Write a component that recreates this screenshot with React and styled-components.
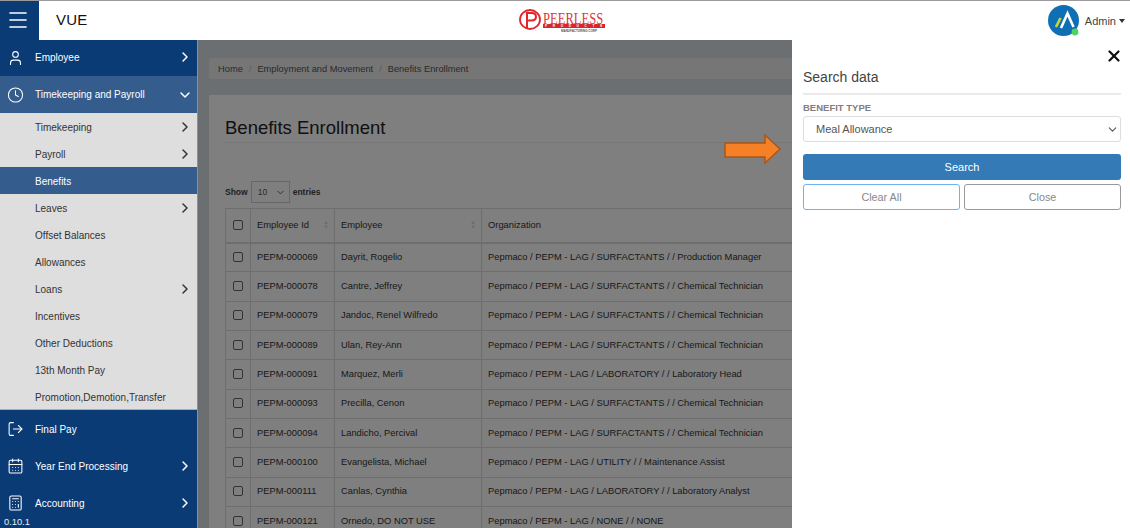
import styled, { createGlobalStyle } from "styled-components";
import { User, Clock, LogOut, CalendarDays, Calculator, ChevronRight, ChevronDown, X, Menu } from "lucide-react";

const GlobalStyle = createGlobalStyle`
  html, body { margin: 0; padding: 0; height: 100%; overflow: hidden; }
  body { font-family: "Liberation Sans", Arial, sans-serif; background: #fff; }
  * { box-sizing: border-box; }
`;

const Page = styled.div`
  width: 1130px;
  height: 528px;
  position: relative;
  overflow: hidden;
  display: flex;
  flex-direction: column;
`;
const Header = styled.header`
  height: 40px;
  flex: none;
  display: flex;
  align-items: center;
  background: #fff;
  border-top: 1px solid #9a9a9a;
`;
const HeaderLeft = styled.div`
  flex: 1;
  display: flex;
  align-items: center;
`;
const MenuButton = styled.div`
  width: 39px;
  height: 39px;
  background: #0b3b75;
  color: #fff;
  display: flex;
  align-items: center;
  justify-content: center;
  padding: 0 3px 1px 0;
`;
const Brand = styled.div`
  margin-left: 17px;
  padding-bottom: 3px;
  font-size: 15px;
  letter-spacing: 0.2px;
  color: #111;
  white-space: nowrap;
`;
const LogoArea = styled.div`
  flex: none;
  display: flex;
`;
const UserArea = styled.div`
  flex: 1;
  display: flex;
  align-items: center;
  justify-content: flex-end;
  gap: 5px;
  padding-right: 5px;
  font-size: 11px;
  color: #444;
`;
const Caret = styled.span`
  width: 0;
  height: 0;
  margin-left: -2px;
  border-left: 3.5px solid transparent;
  border-right: 3.5px solid transparent;
  border-top: 4px solid #333;
`;
const Body = styled.div`
  flex: 1;
  display: flex;
  min-height: 0;
  position: relative;
`;
const Sidebar = styled.nav`
  width: 198px;
  flex: none;
  background: #0b3b75;
  overflow: hidden;
  border-right: 1px solid #8d9094;
`;
const MainRow = styled.div`
  height: ${({ $tall }) => ($tall ? "37px" : "36px")};
  display: flex;
  align-items: center;
  padding: ${({ $nudge }) => ($nudge === "up" ? "0 4px 2px 35px" : $nudge === "down" ? "1px 4px 0 35px" : "0 4px 0 35px")};
  position: relative;
  color: #fff;
  font-size: 10px;
  background: ${({ $open }) => ($open ? "#345d8d" : "transparent")};
  & > span { flex: 1; }
`;
const RowIcon = styled.span`
  position: absolute;
  left: 7px;
  top: 50%;
  transform: translateY(-50%);
  display: flex;
`;
const SubMenu = styled.div`
  background: #dedede;
  box-shadow: inset 0 -1px 0 #a9adb2;
`;
const SubRow = styled.div`
  height: 27px;
  display: flex;
  align-items: center;
  padding: 1px 4px 0 35px;
  font-size: 10px;
  color: ${({ $active }) => ($active ? "#fff" : "#333")};
  background: ${({ $active }) => ($active ? "#345d8d" : "transparent")};
  & > span { flex: 1; }
`;
const Version = styled.div`
  position: absolute;
  left: 4px;
  bottom: 1px;
  font-size: 9.3px;
  color: #e8edf3;
`;
const Main = styled.main`
  flex: 1;
  min-width: 0;
  background: #d6dee4;
  padding: 18px 0 0 11px;
  overflow: hidden;
`;
const Breadcrumb = styled.div`
  height: 21px;
  width: 900px;
  background: #ececec;
  border-radius: 3px;
  display: flex;
  align-items: center;
  gap: 6px;
  padding-left: 9px;
  font-size: 9.3px;
  color: #555;
  & i { font-style: normal; color: #bbb; }
`;
const Card = styled.section`
  margin-top: 16px;
  background: #fff;
  width: 900px;
  height: 600px;
  padding: 20px 16px;
`;
const Title = styled.h1`
  margin: 0;
  font-size: 18.5px;
  line-height: 26px;
  font-weight: 400;
  color: #222;
`;
const Rule = styled.div`
  height: 1px;
  background: #eee;
  margin-top: 1px;
`;
const Entries = styled.div`
  margin-top: 38px;
  display: flex;
  align-items: center;
  gap: 3px;
  font-size: 8.5px;
  font-weight: 700;
  color: #444;
  height: 22px;
`;
const EntriesSelect = styled.div`
  width: 39px;
  height: 22px;
  border: 1px solid #ccc;
  display: flex;
  align-items: center;
  justify-content: space-between;
  padding: 0 3px 0 6px;
  font-weight: 400;
  color: #555;
`;
const Table = styled.table`
  margin-top: 5px;
  border-collapse: collapse;
  table-layout: fixed;
  width: 720px;
  font-size: 9.35px;
  color: #333;
  & th, & td {
    border: 1px solid #ddd;
    padding: 0 6px 1px;
    font-weight: 400;
    text-align: left;
    white-space: nowrap;
    overflow: hidden;
  }
  & th { height: 34px; border-bottom-width: 2px; position: relative; }
  & td { height: 29.35px; }
`;
const Check = styled.span`
  display: block;
  width: 10px;
  height: 10px;
  margin-left: 1px;
  border: 1px solid #666;
  border-radius: 2px;
  background: #fff;
`;
const SortMark = styled.span`
  position: absolute;
  right: 5px;
  top: 11px;
  font-size: 6px;
  line-height: 5px;
  color: #ddd;
`;
const Overlay = styled.div`
  position: absolute;
  inset: 0 0 0 198px;
  background: rgba(0, 0, 0, 0.5);
`;
const ArrowMark = styled.svg`
  position: absolute;
  left: 723px;
  top: 92px;
`;
const Panel = styled.aside`
  position: absolute;
  top: 0;
  right: 0;
  bottom: 0;
  width: 338px;
  background: #fff;
  padding: 0 9px 0 11px;
`;
const CloseButton = styled.div`
  height: 29px;
  display: flex;
  justify-content: flex-end;
  align-items: flex-start;
  color: #111;
  padding-top: 7px;
  margin-right: -2px;
`;
const PanelTitle = styled.h2`
  margin: 0;
  font-size: 14px;
  line-height: 17px;
  height: 26px;
  font-weight: 400;
  color: #444;
  border-bottom: 2px solid #eaeaea;
`;
const Label = styled.div`
  margin-top: 7px;
  font-size: 9.5px;
  line-height: 12px;
  font-weight: 700;
  color: #808080;
`;
const SelectBox = styled.div`
  margin-top: 2px;
  height: 26px;
  border: 1px solid #ddd;
  border-radius: 3px;
  display: flex;
  align-items: center;
  justify-content: space-between;
  padding: 0 1px 0 12px;
  font-size: 11px;
  color: #555;
`;
const PrimaryButton = styled.div`
  margin-top: 12px;
  height: 26px;
  background: #337ab7;
  border-radius: 3px;
  display: flex;
  align-items: center;
  justify-content: center;
  color: #fff;
  font-size: 11px;
`;
const ButtonRow = styled.div`
  margin-top: 4px;
  display: grid;
  grid-template-columns: 1fr 1fr;
  gap: 4px;
`;
const OutlineButton = styled.div`
  height: 26px;
  border: 1px solid ${({ $accent }) => ($accent ? "#6db3f2" : "#999")};
  border-radius: 3px;
  display: flex;
  align-items: center;
  justify-content: center;
  color: #888;
  font-size: 10.8px;
`;

const subItems = [
  ["Timekeeping", true],
  ["Payroll", true],
  ["Benefits", false, true],
  ["Leaves", true],
  ["Offset Balances"],
  ["Allowances"],
  ["Loans", true],
  ["Incentives"],
  ["Other Deductions"],
  ["13th Month Pay"],
  ["Promotion,Demotion,Transfer"],
];

const rows = [
  ["PEPM-000069", "Dayrit, Rogelio", "Pepmaco / PEPM - LAG / SURFACTANTS / / Production Manager"],
  ["PEPM-000078", "Cantre, Jeffrey", "Pepmaco / PEPM - LAG / SURFACTANTS / / Chemical Technician"],
  ["PEPM-000079", "Jandoc, Renel Wilfredo", "Pepmaco / PEPM - LAG / SURFACTANTS / / Chemical Technician"],
  ["PEPM-000089", "Ulan, Rey-Ann", "Pepmaco / PEPM - LAG / SURFACTANTS / / Chemical Technician"],
  ["PEPM-000091", "Marquez, Merli", "Pepmaco / PEPM - LAG / LABORATORY / / Laboratory Head"],
  ["PEPM-000093", "Precilla, Cenon", "Pepmaco / PEPM - LAG / SURFACTANTS / / Chemical Technician"],
  ["PEPM-000094", "Landicho, Percival", "Pepmaco / PEPM - LAG / SURFACTANTS / / Chemical Technician"],
  ["PEPM-000100", "Evangelista, Michael", "Pepmaco / PEPM - LAG / UTILITY / / Maintenance Assist"],
  ["PEPM-000111", "Canlas, Cynthia", "Pepmaco / PEPM - LAG / LABORATORY / / Laboratory Analyst"],
  ["PEPM-000121", "Ornedo, DO NOT USE", "Pepmaco / PEPM - LAG / NONE / / NONE"],
];

function PeerlessLogo() {
  return (
    <svg width="90" height="26" viewBox="0 0 90 26">
      <ellipse cx="12" cy="11.5" rx="10" ry="9.5" fill="none" stroke="#e0262b" strokeWidth="1.8" />
      <path d="M9 21 L9 5 L13.5 5 Q18 5 18 8.5 Q18 12.5 13.5 12.5 L9 12.5" fill="none" stroke="#e0262b" strokeWidth="2" />
      <text transform="translate(25 15.5) scale(0.72 1)" x="0" y="0" fontFamily="Liberation Serif, serif" fontSize="17.5" fill="#d8393d">PEERLESS</text>
      <rect x="25" y="16" width="62" height="4" fill="#d8262b" />
      <text x="27" y="19.3" fontFamily="Liberation Sans, sans-serif" fontSize="3.2" fontWeight="700" fill="#fff" letterSpacing="5.6">PRODUCTS</text>
      <text x="43" y="24" fontFamily="Liberation Sans, sans-serif" fontSize="3" fontWeight="700" fill="#555">MANUFACTURING CORP</text>
    </svg>
  );
}

function Avatar() {
  return (
    <svg width="32" height="32" viewBox="0 0 32 32">
      <circle cx="15.5" cy="15.5" r="15.5" fill="#0f6fb5" />
      <path d="M8 22 L12.5 13" stroke="#c6d63a" strokeWidth="2.6" fill="none" />
      <path d="M13 23 L19.5 8.5 L25.5 22" stroke="#fff" strokeWidth="2.6" fill="none" />
      <circle cx="27" cy="27" r="3.4" fill="#4fd25f" />
    </svg>
  );
}

export default function App() {
  return (
    <Page>
      <GlobalStyle />
      <Header>
        <HeaderLeft>
          <MenuButton>
            <Menu size={24} strokeWidth={1.6} />
          </MenuButton>
          <Brand>VUE</Brand>
        </HeaderLeft>
        <LogoArea>
          <PeerlessLogo />
        </LogoArea>
        <UserArea>
          <Avatar />
          Admin
          <Caret />
        </UserArea>
      </Header>
      <Body>
        <Sidebar>
          <MainRow $nudge="up">
            <RowIcon><User size={17} strokeWidth={1.5} /></RowIcon>
            <span>Employee</span>
            <ChevronRight size={16} strokeWidth={2.2} />
          </MainRow>
          <MainRow $open $tall>
            <RowIcon><Clock size={17} strokeWidth={1.5} /></RowIcon>
            <span>Timekeeping and Payroll</span>
            <ChevronDown size={16} strokeWidth={2.2} />
          </MainRow>
          <SubMenu>
            {subItems.map(([name, arrow, active]) => (
              <SubRow key={name} $active={active}>
                <span>{name}</span>
                {arrow && <ChevronRight size={16} strokeWidth={2.2} />}
              </SubRow>
            ))}
          </SubMenu>
          <MainRow $tall $nudge="down">
            <RowIcon><LogOut size={17} strokeWidth={1.5} /></RowIcon>
            <span>Final Pay</span>
          </MainRow>
          <MainRow $tall $nudge="down">
            <RowIcon><CalendarDays size={17} strokeWidth={1.5} /></RowIcon>
            <span>Year End Processing</span>
            <ChevronRight size={16} strokeWidth={2.2} />
          </MainRow>
          <MainRow $tall $nudge="down">
            <RowIcon><Calculator size={17} strokeWidth={1.5} /></RowIcon>
            <span>Accounting</span>
            <ChevronRight size={16} strokeWidth={2.2} />
          </MainRow>
        </Sidebar>
        <Main>
          <Breadcrumb>
            Home <i>/</i> Employment and Movement <i>/</i> Benefits Enrollment
          </Breadcrumb>
          <Card>
            <Title>Benefits Enrollment</Title>
            <Rule />
            <Entries>
              Show
              <EntriesSelect>10 <ChevronDown size={11} /></EntriesSelect>
              entries
            </Entries>
            <Table>
              <colgroup>
                <col style={{ width: 25 }} />
                <col style={{ width: 84 }} />
                <col style={{ width: 147 }} />
                <col />
              </colgroup>
              <thead>
                <tr>
                  <th><Check /></th>
                  <th>Employee Id<SortMark>▲<br />▼</SortMark></th>
                  <th>Employee<SortMark>▲<br />▼</SortMark></th>
                  <th>Organization</th>
                </tr>
              </thead>
              <tbody>
                {rows.map((row) => (
                  <tr key={row[0]}>
                    <td><Check /></td>
                    <td>{row[0]}</td>
                    <td>{row[1]}</td>
                    <td>{row[2]}</td>
                  </tr>
                ))}
              </tbody>
            </Table>
          </Card>
        </Main>
        <Overlay />
        <ArrowMark width="60" height="34" viewBox="0 0 60 34">
          <path d="M2 11 H42 V3 L57 17 L42 31 V25 H2 Z" fill="#f58025" stroke="#a9551a" strokeWidth="1.4" />
        </ArrowMark>
        <Panel>
          <CloseButton><X size={18} strokeWidth={3} /></CloseButton>
          <PanelTitle>Search data</PanelTitle>
          <Label>BENEFIT TYPE</Label>
          <SelectBox>
            Meal Allowance
            <ChevronDown size={13} />
          </SelectBox>
          <PrimaryButton>Search</PrimaryButton>
          <ButtonRow>
            <OutlineButton $accent>Clear All</OutlineButton>
            <OutlineButton>Close</OutlineButton>
          </ButtonRow>
        </Panel>
        <Version>0.10.1</Version>
      </Body>
    </Page>
  );
}
